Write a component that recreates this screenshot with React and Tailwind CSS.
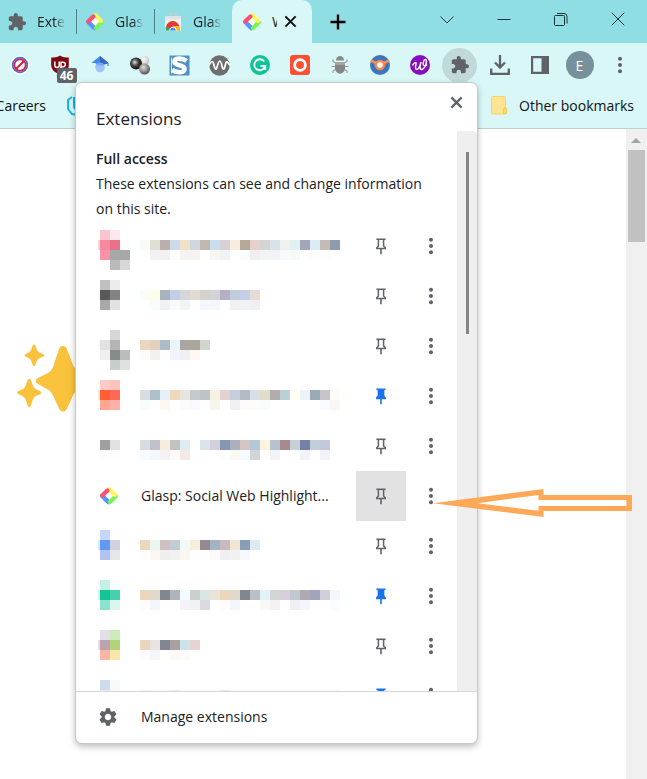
import React from "react";

const ROWS = [
  {
    edge: "#fbd0d8",
    icon: ["#fac5d0", "#fde8ec", "", "#f58a9e", "#ea7288", "#fdfdfd", "#fb92a6", "#a3aaa8", "#a6a7a6", "", "#bababa", "#d8d8d8"],
    top: "f7fcf8 dfe0d1 bbafae ccdbea f0e1c8 d0d7df bfb8af c8dfee d8d1d6 f8ebe0 b5a998 e7d0c9 d3d4d6 d9e2e8 eef1ec dff1f0 a3a6b8 d9edf4 c4bbb7 8f9bae",
    bottom: "ffffff f5f1f0 f1f1f1 fefdfb f7f3f1 f7f3f1 ffffff f9f5ef f0f2f5 ffffff f8feff efeff0 f2f3f5 f1f3f5 f8fafc f7f9f9 ffffff fdfcfa fdfcfb ffffff",
  },
  {
    edge: "#fbfbfb",
    icon: ["#c0c0c0", "#ebebeb", "", "#595959", "#838383", "", "#a9a9a9", "#e2e2e2", ""],
    top: "f8fcfa fdffe9 a8b3be c1cee8 d3d7d6 e2ddd3 d4d3cb d4d4d6 b4b0c6 beccdd c4cee6 e5dcd6",
    bottom: "ffffff f8fcff eff1f4 f8fafd f1f3f5 ffffff f4f8fd f3f7fc ffffff f1f1f1 f1f2f7 f0f0f3",
  },
  {
    edge: "#fafafa",
    icon: ["", "#d7d7d7", "", "#e2e2e2", "#b5b5b5", "", "#f0f0f0", "#868c89", "#b9bdbc", "", "#c8cccb", "#dfe1e0"],
    top: "ecd7be e5d0c0 adbcc6 ebf4f9 a8a7a4 aaa699 d4d4cf",
    bottom: "fefcfa f1f1f1 ffffff f3f4f9 f1f1f5 fdf8f4 ffffff",
  },
  {
    pinned: true,
    edge: "#ffe7e2",
    icon: ["#ffcbc4", "#ffc1bd", "", "#ff6031", "#ff6855", "", "#ffa590", "#ffb0a9", ""],
    top: "d7dee2 afc0cd e6f1f7 eed9bd e6e6df c8c9cd bdc3c7 f7f1e3 e5d1d0 c5cfdb b4bbc4 d7dfe8 e0decb b3acad bbcfd4 fffef4 edf3f8 9aabb7 c8c5ca fffcf8",
    bottom: "f7fcff ffffff fdf8f4 ffffff fdfbf9 f7fbff ffffff f8f5ef ffffff f0f0f2 fefcfa fefcfa f7fcff ffffff ffffff ffffff ffffff ffffff f7fbff faf6f3",
  },
  {
    edge: "#fdfdfd",
    icon: ["", "", "", "#a0a0a0", "#e1e1e1", "", "#fcfcfc", "#fcfcfc", ""],
    top: "d7dce1 c3c0ce f7eddd c2c3c0 dfedf3 ffffff d9e4eb d3d0db 8499b0 acafb9 d6c5c2 b2c9d8 fff3df b5c2cf a8898d c4d1d9 7681a4 c1cfdd c1c9da",
    bottom: "f6fbff f3f8fc f4f2f4 fefbf6 f5eae3 ffffff ffffff ffffff fcfefe faf9f4 f6fbff d1d5d8 ffffff f2f3f5 ffffff fefefe f2f3f8 ffffff f2f3f8",
  },
  { name: "Glasp: Social Web Highlight...", active: true },
  {
    edge: "#dceafa",
    icon: ["#c4d8fc", "", "", "#619af2", "#cdd4df", "", "#b1c4f1", "#e5e6e9", ""],
    top: "ecd8be ebf5f2 d2bfc1 c2ccd3 f1faf6 f6eedb 968890 a1b4c3 c9bac2 f1e6d3 889db6 dce8f2",
    bottom: "fefcfa fbf7f5 efefee f1f1f1 faf6f2 ffffff ffffff fcfbf7 f0f0f2 f1f1f0 f6faff ffffff",
  },
  {
    pinned: true,
    edge: "#d9f6ee",
    icon: ["#c4f0e5", "#f7fefc", "", "#13c497", "#45d0ae", "", "#8be2ce", "#daf6ee", ""],
    top: "ecd7be e0dacd 808790 afb4ba f0fbfe cccfca d7e7e6 ebe2d8 ecd7be e0dacd 808790 b8bfc5 e2f2f9 d2d7d5 d8ceda c1c9d0 afa9b0 a1a4bc d1cfda f4f6f9",
    bottom: "fefcfa f3f6fc ffffff ffffff f5f3f8 f1f2f3 dadae4 ffffff fefcfa f3f6fc ffffff ffffff f7f7f5 f3f3f3 ffffff f0f0f3 f4f6fb ffffff ffffff f9fdff",
  },
  {
    edge: "#eadde5",
    icon: ["#e2dfe9", "#cfeabb", "", "#bea1af", "#b0d477", "", "#f9b6a6", "#f8e5a7", ""],
    top: "ecd7be e8e4e1 808790 a9a0a1 cde3ec e7d3d1",
    bottom: "fefcfa f3f6fc ffffff fef9f4 fdfcfa ffffff",
  },
  {
    pinned: true,
    icon: ["#ccdced", "#f7f9fc", "", "#e9edf3", "#f7f8fa", ""],
    top: "f2f2f2 f7f7f7 f7f7f7 e9e9f1 f7f7f7 f7f7f7 f7f7f7 f7f7f7 e9e9e9 f7f7f7 f7f7f7 f7f7f7 f7f7f7 f7f7f7 f7f7f7 f7f7f7 f7f7f7 f7f7f7 f7f7f7 f7f7f7",
    bottom: "",
  },
];

function Glasp() {
  return (
    <svg width="20" height="20" viewBox="0 0 20 20" aria-hidden="true">
      <path d="M10 5.500L14.500 10L10 14.500L5.500 10z" fill="#fff" />
      <g fill="none" strokeWidth="4.200">
        <path d="M9.500 16.300L3.200 10" stroke="#5b95ff" strokeLinecap="round" />
        <path d="M16.800 10.200L11 16" stroke="#78f553" strokeLinecap="round" />
        <path d="M10.300 3.200L16 8.900" stroke="#fff65c" strokeLinecap="round" />
        <path d="M3.200 9.600L8.400 4.400" stroke="#ff4f73" strokeLinecap="round" />
        <path d="M5 11.800L8.500 15.300" stroke="#5b95ff" />
      </g>
    </svg>
  );
}

function Puzzle({ size = 20 }) {
  return (
    <svg width={size} height={size} viewBox="1 1 22 22" fill="#5f6368" aria-hidden="true">
      <path d="M20.5 11H19V7c0-1.1-.9-2-2-2h-4V3.5C13 2.12 11.88 1 10.5 1S8 2.12 8 3.5V5H4c-1.1 0-1.99.9-1.99 2v3.8H3.5c1.49 0 2.7 1.21 2.7 2.7s-1.21 2.7-2.7 2.7H2V20c0 1.1.9 2 2 2h3.8v-1.5c0-1.49 1.21-2.7 2.7-2.7 1.49 0 2.7 1.21 2.7 2.7V22H17c1.1 0 2-.9 2-2v-4h1.5c1.38 0 2.5-1.12 2.5-2.5S21.88 11 20.5 11z" />
    </svg>
  );
}

function Store() {
  return (
    <svg width="18" height="18" viewBox="0 0 18 18" aria-hidden="true">
      <path d="M6 3V1h6v2" fill="none" stroke="#c9ced1" strokeWidth="1.5" />
      <rect x="1" y="3" width="16" height="14.500" rx="1" fill="#f1f3f3" />
      <rect x="1" y="3" width="16" height="3.500" fill="#dfe3e5" />
      <path d="M2 17.500a7 7.500 0 0 1 13.500-4H9z" fill="#e33b2e" />
      <path d="M2 17.500a7 7 0 0 1 1.300-4.500L7 17.500z" fill="#2da94f" />
      <path d="M9 13.500h6.500a7 7 0 0 1 .5 4h-5z" fill="#fdbd00" />
      <path d="M5.400 17.500a3.600 3.600 0 1 1 7.200 0z" fill="#fff" />
      <path d="M6.300 17.500a2.700 2.700 0 1 1 5.400 0z" fill="#4285f4" />
    </svg>
  );
}

function Pin({ filled }) {
  const c = filled ? "#1a73e8" : "#5f6368";
  return (
    <svg width="20" height="20" viewBox="0 0 20 20" fill="none" aria-hidden="true">
      <path
        d="M7.4 3.4V10L5.8 11.8V12.4H14.2V11.8L12.6 10V3.4"
        stroke={c}
        strokeWidth="1.5"
        fill={filled ? c : "none"}
      />
      <path d="M5.4 3.3H14.6" stroke={c} strokeWidth="1.6" />
      <path d="M10 12.4V18.2" stroke={c} strokeWidth="1.6" />
    </svg>
  );
}

function Dots() {
  return (
    <svg width="20" height="20" viewBox="0 0 20 20" fill="#5f6368" aria-hidden="true">
      <circle cx="10" cy="3.8" r="2" />
      <circle cx="10" cy="10" r="2" />
      <circle cx="10" cy="16.2" r="2" />
    </svg>
  );
}

function Cross({ size, color, width }) {
  return (
    <svg width={size} height={size} viewBox="0 0 14 14" fill="none" stroke={color} strokeWidth={width} aria-hidden="true">
      <path d="M1.5 1.5L12.5 12.5M12.5 1.5L1.5 12.5" />
    </svg>
  );
}

const TOOLS = [
  [
    "Blocker",
    <svg key="i" width="20" height="20" viewBox="0 0 20 20" fill="none">
      <circle cx="10" cy="10" r="9.5" fill="#fff" />
      <circle cx="10" cy="10" r="7.4" stroke="#3b6fe0" strokeWidth="1.600" />
      <circle cx="10" cy="10" r="5.700" stroke="#d81e3c" strokeWidth="1.8" />
      <path d="M6 14L14 6" stroke="#d81e3c" strokeWidth="2" />
    </svg>,
  ],
  [
    "uBlock",
    <span key="i" className="relative block h-[20px] w-[20px]">
      <svg width="20" height="20" viewBox="0 0 20 20" fill="none">
        <path d="M10 .5C7 2.500 4 2.600 1.200 2.600V10c0 5 4 7.500 8.800 9.600 4.800-2.100 8.800-4.600 8.800-9.600V2.600C16 2.600 13 2.500 10 .5z" fill="#800610" />
        <path d="M4.800 6.500v3.700a2.200 2.200 0 0 0 4.400 0V6.500M11 13V7.200h2a2.100 2.100 0 0 1 0 4.600h-2" stroke="#fff" strokeWidth="1.500" />
      </svg>
      <span className="absolute left-[7px] top-[13px] h-[15px] w-[20px] rounded-[2px] bg-[#5f6368] text-center text-[12px] font-bold leading-[15px] text-white">
        46
      </span>
    </span>,
  ],
  [
    "Scholar",
    <svg key="i" width="20" height="20" viewBox="0 0 20 20">
      <path d="M10 1L1.500 8H5l5 3 5-3h3.500z" fill="#4285f4" />
      <path d="M10 1l8.500 7v3h-1V8.500L10 11z" fill="#356ac3" />
      <circle cx="10" cy="12.500" r="4.800" fill="#a0c3ff" />
      <path d="M5.500 10.500a5 5 0 0 1 9 0" fill="#76a7fa" />
    </svg>,
  ],
  [
    "Spheres",
    <svg key="i" width="22" height="20" viewBox="0 0 22 20">
      <defs>
        <radialGradient id="sw" cx=".4" cy=".35" r=".7"><stop offset="0" stopColor="#fff" /><stop offset="1" stopColor="#bbb" /></radialGradient>
        <radialGradient id="sb" cx=".4" cy=".4" r=".6"><stop offset="0" stopColor="#ddd" /><stop offset=".5" stopColor="#444" /><stop offset="1" stopColor="#111" /></radialGradient>
        <radialGradient id="sg" cx=".4" cy=".35" r=".7"><stop offset="0" stopColor="#ddd" /><stop offset=".6" stopColor="#888" /><stop offset="1" stopColor="#444" /></radialGradient>
      </defs>
      <circle cx="15.500" cy="5.500" r="4.800" fill="url(#sw)" />
      <circle cx="7" cy="8.500" r="6" fill="url(#sb)" />
      <circle cx="15.500" cy="14" r="5.500" fill="url(#sg)" />
    </svg>,
  ],
  [
    "S reader",
    <svg key="i" width="21" height="21" viewBox="0 0 21 21" fill="none">
      <rect x=".5" y=".5" width="20" height="20" fill="#4f8fc4" />
      <path d="M17.500 6C13 2.500 5.500 3 5.500 6.800c0 4.700 10 2.400 10 7.200 0 4.200-8 4-12.500 1" stroke="#fff" strokeWidth="4.600" />
      <path d="M2.500 2.500V18.500" stroke="#fff" strokeWidth=".8" />
    </svg>,
  ],
  [
    "Wordtune",
    <svg key="i" width="21" height="21" viewBox="0 0 21 21" fill="none">
      <circle cx="10.500" cy="10.500" r="10.200" fill="#6e6e6e" />
      <path d="M0 10.500C2.500 5 4 5.500 5 10s2 6 3.200 1.500S9.800 6 10.700 6s1.500 1.500 2.400 5.500 2.200 3.500 3.200-1.500S18.500 6.500 21 10.500" stroke="#fff" strokeWidth="1.700" />
    </svg>,
  ],
  [
    "Grammarly",
    <svg key="i" width="20" height="20" viewBox="0 0 20 20" fill="none">
      <circle cx="10" cy="10" r="10" fill="#11c39a" />
      <path d="M14.300 6.500A5.500 5.500 0 1 0 15.200 11H10.500M15.300 10.500V15" stroke="#fff" strokeWidth="1.800" />
    </svg>,
  ],
  [
    "O search",
    <svg key="i" width="20" height="20" viewBox="0 0 20 20" fill="none">
      <rect width="20" height="20" rx="3" fill="#ff4f32" />
      <circle cx="10" cy="10" r="5.400" stroke="#fff" strokeWidth="2.800" />
    </svg>,
  ],
  [
    "Bug",
    <svg key="i" width="18" height="20" viewBox="0 0 18 20" fill="none">
      <path d="M5 8L2 6.500V4.500M13 8l3-1.500V4.500M4.500 11.500H.5M13.500 11.500h4M5 14.500l-3 1.500v2M13 14.500l3 1.500v2" stroke="#999" strokeWidth="1.200" />
      <path d="M5 5.500a4 4.500 0 0 1 8 0z" fill="#8a8a8a" />
      <path d="M4 7h10v6a5 5.800 0 0 1-10 0z" fill="#858585" />
      <path d="M4 7h10v3H4z" fill="#a5a5a5" />
    </svg>,
  ],
  [
    "Compass",
    <svg key="i" width="20" height="20" viewBox="0 0 20 20" fill="none">
      <circle cx="10" cy="10" r="10" fill="#3b76bd" />
      <path d="M1 5.500L7 8.500M19 5.500L13 8.500" stroke="#ff8a4a" strokeWidth="2.600" />
      <circle cx="10" cy="10" r="4" fill="#fff" stroke="#ff8a4a" strokeWidth="2.400" />
    </svg>,
  ],
  [
    "W writer",
    <svg key="i" width="20" height="20" viewBox="0 0 20 20" fill="none">
      <circle cx="10" cy="10" r="10" fill="#8a0cc0" />
      <path d="M2.500 10.500C4.500 7.500 6.500 6.500 6 9S4.800 14.500 6.800 14.500 10 11 11 7C10 11 9.500 14.500 11.500 14.500 14.500 14.500 17.500 7 16 4.500 14 3.500 13 8 13.200 9.500 14 11.500 16 11 17 9.500" stroke="#fff" strokeWidth="1.400" />
    </svg>,
  ],
  ["Extensions", <span key="i" className="flex h-[35px] w-[35px] items-center justify-center rounded-full bg-[#c1dad9]"><Puzzle size={18} /></span>],
  [
    "Downloads",
    <svg key="i" width="20" height="20" viewBox="0 0 20 20" fill="none" stroke="#5f6368" strokeWidth="2.300">
      <path d="M10 0V12M5 7.500L10 12.500L15 7.500M1.200 13.500V18.800H18.800V13.500" />
    </svg>,
  ],
  [
    "Side panel",
    <svg key="i" width="18" height="18" viewBox="0 0 18 18" fill="#5f6368">
      <path d="M0 0h18v18H0zM2.200 2.200v13.600h8.300V2.200z" fillRule="evenodd" />
    </svg>,
  ],
  ["Profile", <span key="i" className="flex h-[28px] w-[28px] items-center justify-center rounded-full bg-[#78909c] text-[14px] text-white">E</span>],
  ["Menu", <Dots key="i" />],
];

const TABS = [
  { label: "Extensions", icon: <Puzzle size={18} /> },
  { label: "Glasp", icon: <Glasp /> },
  { label: "Glasp", icon: <Store /> },
];

function Cells({ colors, cols }) {
  return (
    <div className={cols === 3 ? "grid w-[30px] grid-cols-3" : "flex"}>
      {colors.map((c, i) => (
        <span key={i} className="h-[10px] w-[10px] shrink-0" style={{ backgroundColor: c || "transparent" }} />
      ))}
    </div>
  );
}

const hexes = (s) => (s ? s.split(" ").map((c) => "#" + c) : []);

function Row({ row }) {
  return (
    <li className="flex h-[50px]">
      {row.name ? (
        <div className="flex min-w-0 flex-1 items-center">
          <span className="flex w-[45px] pl-[3px]"><Glasp /></span>
          <span className="whitespace-nowrap pb-[2px] text-[14px]">{row.name}</span>
        </div>
      ) : (
        <div className="flex min-w-0 flex-1 items-start" aria-hidden="true">
          <div className="flex w-[44px] pl-[2px] pt-[9px]">
            <span className="mt-[10px] h-[10px] w-[2px]" style={{ backgroundColor: row.edge || "transparent" }} />
            <Cells colors={row.icon} cols={3} />
          </div>
          <div className="pt-[19px]">
            <Cells colors={hexes(row.top)} />
            <Cells colors={hexes(row.bottom)} />
          </div>
        </div>
      )}
      <button
        type="button"
        aria-label="Pin extension"
        className={"flex h-[50px] w-[50px] shrink-0 items-center justify-center " + (row.active ? "bg-[#e2e2e2]" : "")}
      >
        <Pin filled={row.pinned} />
      </button>
      <button type="button" aria-label="More options" className="flex h-[50px] w-[50px] shrink-0 items-center justify-center">
        <Dots />
      </button>
    </li>
  );
}

function Popup() {
  return (
    <section
      aria-label="Extensions"
      className="absolute left-[75px] top-[82px] z-10 w-[403px] overflow-hidden rounded-[7px] border border-[#c6c9c9] bg-white text-[#202124] shadow-[0_3px_6px_rgba(0,0,0,0.25)]"
    >
      <header className="flex h-[48px] justify-between pl-[20px] pr-[14px]">
        <h1 className="pt-[23px] text-[17px] leading-[25px]">Extensions</h1>
        <button type="button" aria-label="Close" className="flex h-[38px] items-center">
          <Cross size={13} color="#5f6368" width={2.4} />
        </button>
      </header>
      <div className="flex h-[560px] overflow-hidden">
        <div className="min-w-0 flex-1 pl-[20px] pr-px pt-[15px] text-[14px] leading-[25px]">
          <h2 className="font-semibold">Full access</h2>
          <p className="pr-[20px]">These extensions can see and change information on this site.</p>
          <ul>
            {ROWS.map((r, i) => (
              <Row key={i} row={r} />
            ))}
          </ul>
        </div>
        <div className="flex w-[20px] justify-center rounded-tr-[4px] bg-[#efefef] pt-[21px]">
          <div className="h-[182px] w-[3px] bg-[#858585]" />
        </div>
      </div>
      <footer className="border-t border-[#d5d7da] pb-[2px]">
        <button type="button" className="flex h-[49px] w-full items-center pl-[23px] text-[14px]">
          <svg width="18" height="18" viewBox="2 2 20 20" fill="#5f6368" aria-hidden="true">
            <path d="M19.140 12.940c.04-.3.06-.61.06-.94 0-.32-.02-.64-.07-.94l2.030-1.580a.49.49 0 0 0 .12-.61l-1.920-3.320a.488.488 0 0 0-.59-.22l-2.390.96c-.5-.38-1.030-.7-1.620-.94l-.36-2.540a.484.484 0 0 0-.48-.41h-3.840c-.24 0-.43.17-.47.41l-.36 2.540c-.59.24-1.130.57-1.620.94l-2.390-.96c-.22-.08-.47 0-.59.22L2.740 8.870c-.12.21-.08.47.12.61l2.030 1.580c-.05.3-.09.63-.09.94s.02.64.07.94l-2.030 1.580a.49.49 0 0 0-.12.61l1.920 3.320c.12.22.37.29.59.22l2.390-.96c.5.38 1.030.7 1.620.94l.36 2.540c.05.24.24.41.48.41h3.840c.24 0 .44-.17.47-.41l.36-2.540c.59-.24 1.130-.56 1.620-.94l2.390.96c.22.08.47 0 .59-.22l1.920-3.320c.12-.22.07-.47-.12-.61l-2.010-1.580zM12 15.600c-1.980 0-3.600-1.620-3.600-3.600s1.620-3.600 3.600-3.600 3.600 1.620 3.600 3.600-1.620 3.600-3.600 3.600z" />
          </svg>
          <span className="pl-[24px]">Manage extensions</span>
        </button>
      </footer>
    </section>
  );
}

export default function App() {
  return (
    <div className="relative flex min-h-screen flex-col overflow-hidden bg-white font-['Open_Sans','Noto_Sans',sans-serif] text-[14px] text-[#202124]">
      <nav aria-label="Tabs" className="flex h-[43px] bg-[#8fdee3]">
        {TABS.map((t, i) => (
          <div key={i} className="flex w-[78px] shrink-0 items-center">
            <button type="button" className="flex h-full min-w-0 flex-1 items-center gap-[10px] overflow-hidden pl-[7px]">
              <span className="flex w-[20px] shrink-0 justify-center">{t.icon}</span>
              <span className="w-[29px] overflow-hidden whitespace-nowrap text-left [mask-image:linear-gradient(to_right,#000_60%,transparent)]">
                {t.label}
              </span>
            </button>
            <span className={"mr-px h-[25px] w-px " + (i < 2 ? "bg-[#4c8287]" : "")} />
          </div>
        ))}
        <div className="-ml-[2px] flex w-[80px] shrink-0 items-center rounded-t-[10px] bg-[#d9f7f7] pl-[10px]">
          <Glasp />
          <span className="ml-[10px] w-[5px] overflow-hidden">W</span>
          <button type="button" aria-label="Close tab" className="ml-[7px]">
            <Cross size={13} color="#111" width={2.2} />
          </button>
        </div>
        <button type="button" aria-label="New tab" className="flex w-[52px] items-center justify-center">
          <svg width="16" height="16" viewBox="0 0 16 16" stroke="#000" strokeWidth="2.4" aria-hidden="true">
            <path d="M8 .5V15.500M.5 8H15.500" />
          </svg>
        </button>
        <div className="ml-auto mr-px flex h-[37px]">
          {[
            ["Search tabs", "M.5 4.500L7 11L13.500 4.500"],
            ["Minimize", "M.5 7.500H13.500"],
            ["Restore", "M1.500 3.500h8a1 1 0 0 1 1 1v8a1 1 0 0 1-1 1h-8a1 1 0 0 1-1-1v-8a1 1 0 0 1 1-1zM3 1.500h7a3 3 0 0 1 3 3V11.500"],
            ["Close window", "M.7 .7L13.300 13.300M13.300 .7L.7 13.300"],
          ].map(([label, d]) => (
            <button key={label} type="button" aria-label={label} className="flex w-[57px] items-center justify-center">
              <svg width="14" height="14" viewBox="0 0 14 14" fill="none" stroke="#14373a" strokeWidth="1" aria-hidden="true">
                <path d={d} />
              </svg>
            </button>
          ))}
        </div>
      </nav>
      <div className="flex h-[44px] bg-[#d9f7f7]">
        {TOOLS.map(([label, icon]) => (
          <button key={label} type="button" aria-label={label} className="flex w-[40px] shrink-0 items-center justify-center pr-px">
            {icon}
          </button>
        ))}
      </div>
      <div className="flex h-[42px] items-center border-b border-[#b9d3d4] bg-[#d9f7f7] pb-[4px] text-[#111]">
        <a href="#careers" className="flex w-[46px] justify-end">Careers</a>
        <svg className="ml-[20px]" width="20" height="20" viewBox="0 0 20 20" fill="none" stroke="#14b4e8" strokeWidth="2" aria-hidden="true">
          <path d="M6 1L2 4v9l4 5 6 1M8 1v9a4 4 0 0 0 4 4" />
        </svg>
        <a href="#other" className="ml-auto mr-[13px] flex items-center gap-[12px]">
          <svg width="16" height="19" viewBox="0 0 16 19" aria-hidden="true">
            <path d="M1.500.5h12a1 1 0 0 1 1 1V12l1 1v4a1 1 0 0 1-1 1H1.500a1 1 0 0 1-1-1V1.500a1 1 0 0 1 1-1z" fill="#ffe591" stroke="#f5d663" />
            <path d="M12.500 18v-5l1.500-1.500 1.500 1.500v3.500z" fill="#ffdc69" stroke="#f0c94b" />
          </svg>
          Other bookmarks
        </a>
      </div>
      <main className="flex flex-1">
        <div className="flex-1 pl-[16px] pt-[213px]">
          <svg width="90" height="72" viewBox="0 0 90 72" fill="#f9c23c" aria-hidden="true">
            <path d="M43 7C44.500 3 49.500 3 51 7l6 16q2 5 7 7l14 5c4 1.500 4 5 0 6.500l-14 5q-5 2-7 7l-6 13c-1.500 4-6.500 4-8 0l-6-13q-2-5-7-7l-8-4.500c-3-1.500-3-4.500 0-6l8-4q5-2 7-7z" />
            <path d="M16.500 4c.6-2 2.400-2 3 0l1.500 4q.8 1.800 2.500 2.500l3.500 1.500c1.600.7 1.600 2 0 2.700L23.500 16q-1.700.8-2.500 2.500l-1.500 4c-.6 2-2.400 2-3 0l-1.500-4q-.8-1.700-2.500-2.500L9.800 14.700c-1.600-.7-1.600-2 0-2.700l2.700-1.500q1.700-.7 2.500-2.500z" />
            <path d="M11.500 38.500c.8-2.400 2.700-2.400 3.500 0l2 5.500q1 2.200 3 3.200l4 1.800c1.700.8 1.700 2.400 0 3.200l-4 1.800q-2 1-3 3.200l-2 6c-.8 2.400-2.700 2.400-3.500 0l-2-6q-1-2.200-3-3.200l-4-1.800c-1.700-.8-1.700-2.400 0-3.200l4-1.800q2-1 3-3.200z" />
          </svg>
        </div>
        <div className="flex w-[21px] flex-col items-center bg-[#f0f0f0] pr-px pt-[9px]">
          <svg width="10" height="5" viewBox="0 0 10 5" fill="#a3a3a3" aria-hidden="true">
            <path d="M0 5L5 0L10 5z" />
          </svg>
          <div className="mt-[7px] h-[92px] w-[17px] bg-[#c1c1c1]" />
        </div>
      </main>
      <Popup />
      <svg className="absolute left-[433px] top-[489px] z-20" width="200" height="28" viewBox="0 0 200 28" fill="#ffa858" aria-hidden="true">
        <path
          fillRule="evenodd"
          d="M0 14.300L110.500 0V6H199V22H110.500V28zM44 14.300L105.500 21.800V17H193.500V11H105.500V6z"
        />
      </svg>
    </div>
  );
}
